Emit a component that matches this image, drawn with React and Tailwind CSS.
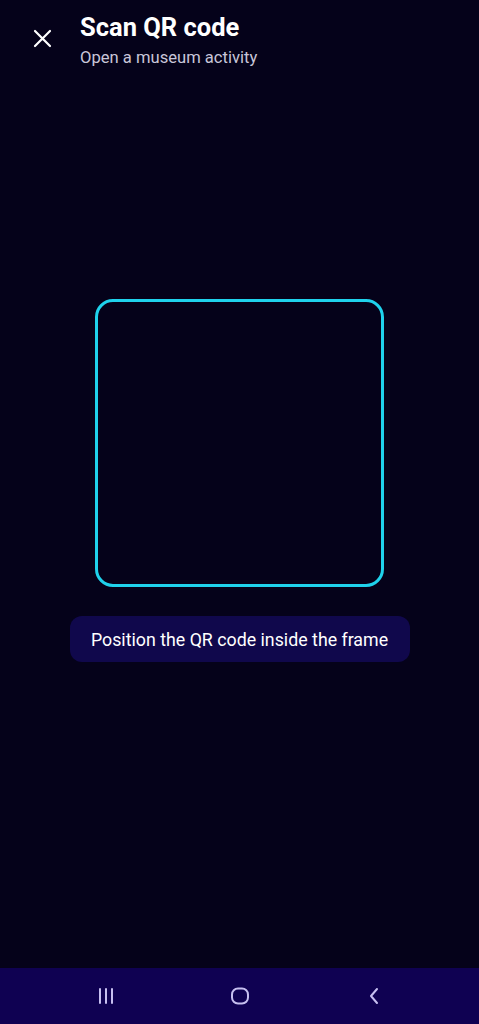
import React from "react";

const font = { fontFamily: "Roboto, 'Noto Sans', sans-serif" };

const App = () => {
  return (
    <div
      className="h-[1024px] w-full flex flex-col bg-[#05021a] text-white overflow-hidden"
      style={font}
    >
      {/* Header */}
      <header className="flex items-start pt-[11px]">
        <button className="w-[80px] h-[56px] flex items-start justify-center pt-[18px] pl-[4px]">
          <svg width="19" height="19" viewBox="0 0 19 19" fill="none">
            <path
              d="M2 2L17 17M17 2L2 17"
              stroke="#ffffff"
              strokeWidth="2.2"
              strokeLinecap="round"
            />
          </svg>
        </button>
        <div className="flex flex-col">
          <h1 className="text-[25.5px] leading-8 font-bold">Scan QR code</h1>
          <p className="mt-[3px] text-[16.6px] leading-6 text-[#c9c6d9]">
            Open a museum activity
          </p>
        </div>
      </header>

      {/* Scanner */}
      <main className="flex-1 flex flex-col items-center pt-[229px]">
        <div className="w-[289px] h-[288px] rounded-[18px] border-[3.5px] border-[#1fd2ec]" />
        <div className="mt-[29px] w-[340px] h-[46px] pt-[3px] rounded-[12px] bg-[#10084c] flex items-center justify-center">
          <span className="text-[17.8px] text-white">
            Position the QR code inside the frame
          </span>
        </div>
      </main>

      {/* System nav */}
      <nav className="h-14 bg-[#0f0152] flex items-center justify-center gap-[94px]">
        <div className="w-10 flex justify-center">
          <svg width="18" height="18" viewBox="0 0 18 18" fill="none">
            <path
              d="M3 2V16M9 2V16M15 2V16"
              stroke="#c6bff0"
              strokeWidth="2"
              strokeLinecap="round"
            />
          </svg>
        </div>
        <div className="w-10 flex justify-center">
          <svg width="20" height="20" viewBox="0 0 20 20" fill="none">
            <rect
              x="2"
              y="2.5"
              width="16"
              height="15"
              rx="6"
              stroke="#c6bff0"
              strokeWidth="2"
            />
          </svg>
        </div>
        <div className="w-10 flex justify-center">
          <svg width="14" height="20" viewBox="0 0 14 20" fill="none">
            <path
              d="M10 3L4 10L10 17"
              stroke="#c6bff0"
              strokeWidth="2"
              strokeLinecap="round"
              strokeLinejoin="round"
            />
          </svg>
        </div>
      </nav>
    </div>
  );
};

export default App;
